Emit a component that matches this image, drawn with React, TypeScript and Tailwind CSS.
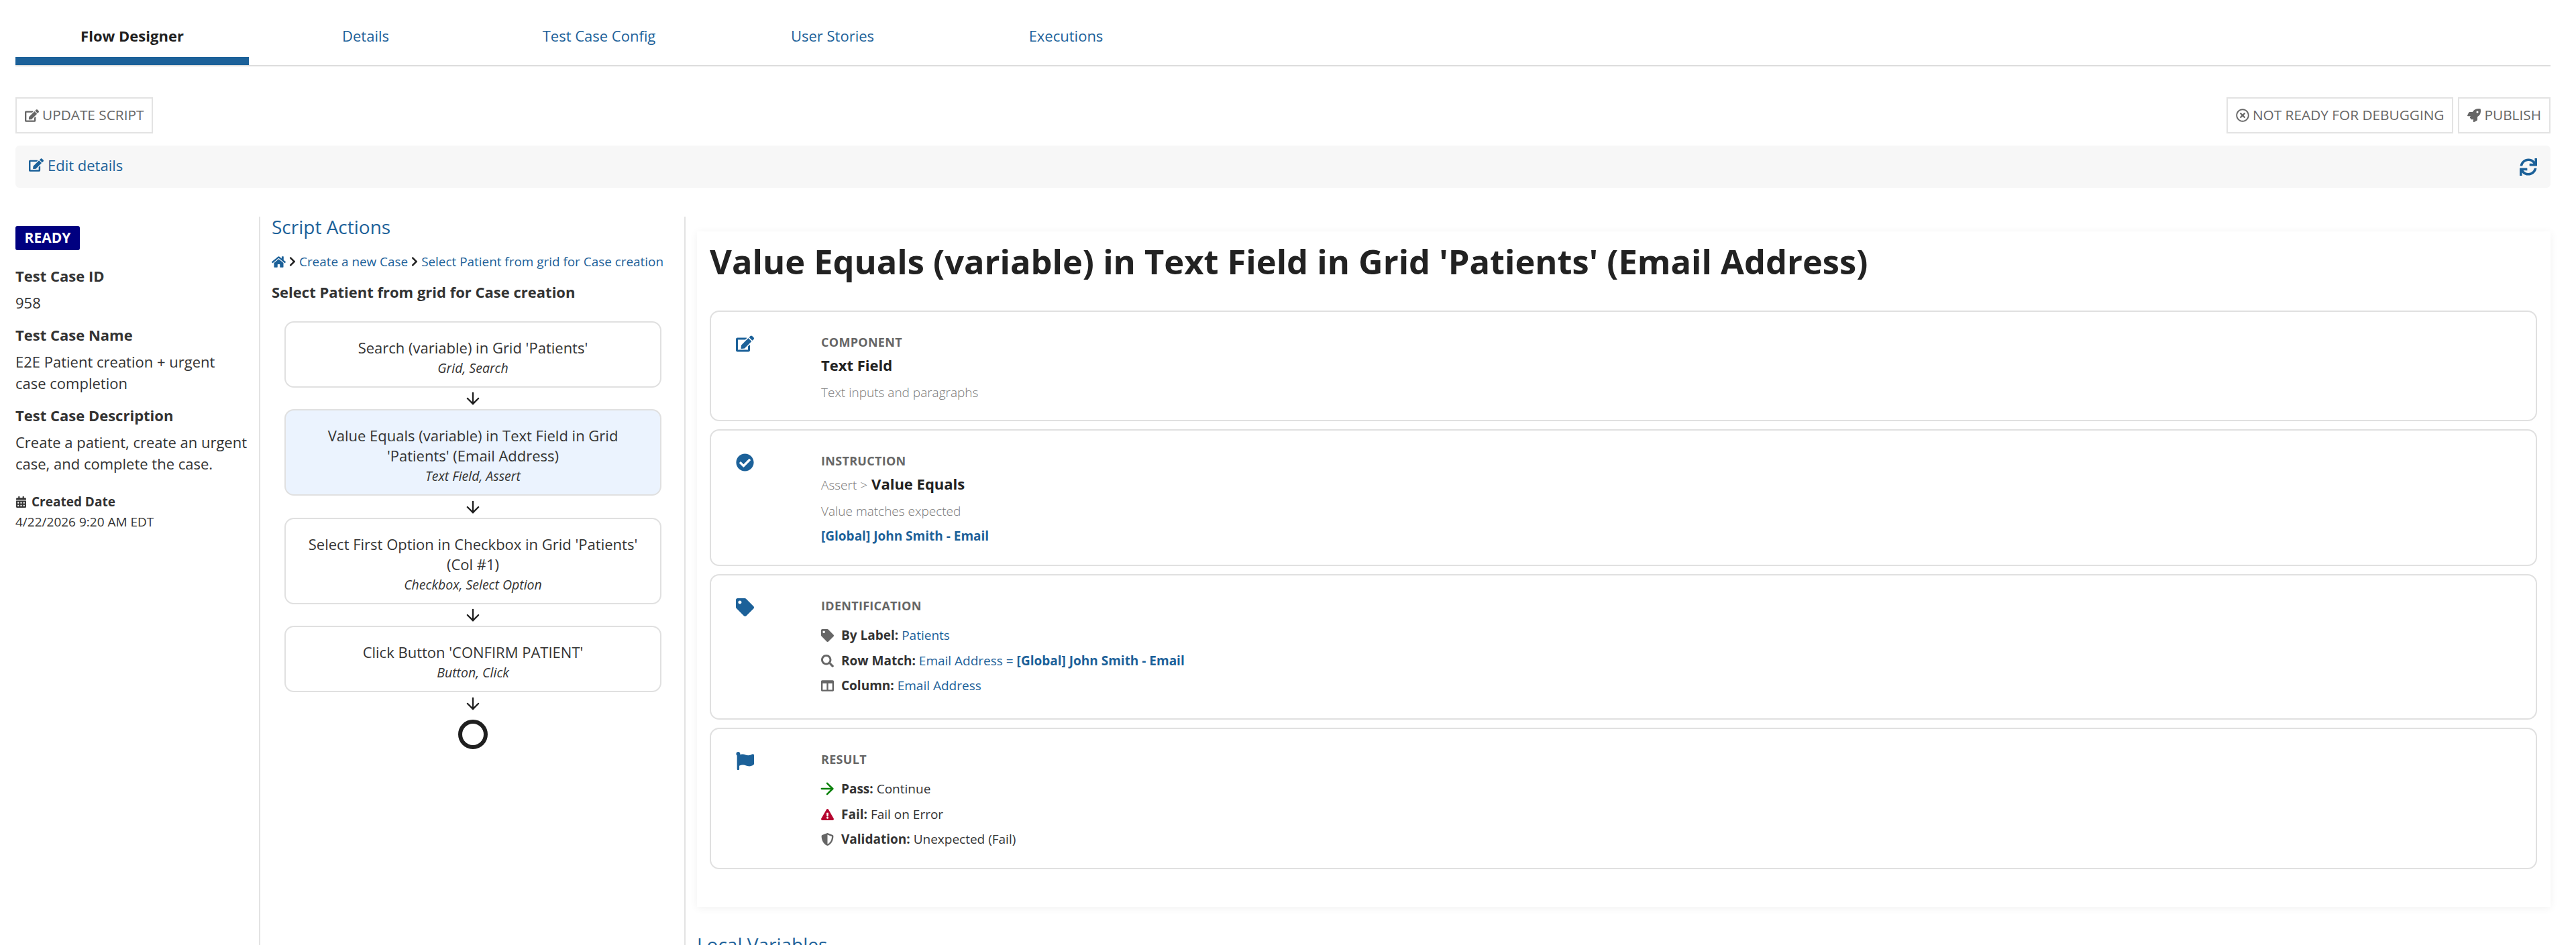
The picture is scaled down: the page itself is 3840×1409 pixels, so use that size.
import { ArrowDown, ArrowRight } from "lucide-react";
import {
  FaCalendarAlt,
  FaCheckCircle,
  FaChevronRight,
  FaColumns,
  FaEdit,
  FaExclamationTriangle,
  FaFlag,
  FaHome,
  FaRegTimesCircle,
  FaRocket,
  FaSearch,
  FaShieldAlt,
  FaSync,
  FaTag,
} from "react-icons/fa";
import type { ReactNode } from "react";

const tabs = ["Details", "Test Case Config", "User Stories", "Executions"];

function ToolButton({ icon, label }: { icon: ReactNode; label: string }) {
  return (
    <button className="h-[54px] flex items-center gap-[5px] px-[12px] bg-white border-2 border-[#e3e3e3] text-[20.8px] font-medium text-[#666666]">
      {icon}
      {label}
    </button>
  );
}

function Step({ title, sub, active }: { title: ReactNode; sub: string; active?: boolean }) {
  return (
    <div
      className={`w-[562px] ml-[19px] rounded-[14px] border-2 border-[#e0e0e0] pt-[22px] pb-[14px] px-[20px] text-center ${
        active ? "bg-[#ebf3fe]" : "bg-white"
      }`}
    >
      <div className="text-[22px] leading-[30px] text-[#333333]">{title}</div>
      <div className="mt-[3px] text-[19.5px] leading-[26px] italic text-[#333333]">{sub}</div>
    </div>
  );
}

function FlowArrow({ h }: { h: string }) {
  return (
    <div className={`w-[562px] ml-[19px] flex items-center justify-center ${h}`}>
      <ArrowDown size={28} strokeWidth={2} className="text-[#1f1f1f]" />
    </div>
  );
}

function InfoCard({ icon, label, pb, children }: { icon: ReactNode; label: string; pb: string; children: ReactNode }) {
  return (
    <div className={`flex rounded-[14px] border-2 border-[#e0e0e0] pt-[32px] ${pb}`}>
      <div className="w-[164px] pl-[37px] pt-[2px] shrink-0 text-[#1c6199]">{icon}</div>
      <div>
        <div className="text-[18px] leading-[26px] font-bold tracking-[0.3px] text-[#666666] uppercase">{label}</div>
        {children}
      </div>
    </div>
  );
}

function Row({ icon, children, mt }: { icon: ReactNode; children: ReactNode; mt: string }) {
  return (
    <div className={`flex items-center text-[19px] leading-[26px] text-[#333333] ${mt}`}>
      <span className="w-[30px] shrink-0 flex items-center text-[#666666]">{icon}</span>
      {children}
    </div>
  );
}

export default function App() {
  return (
    <div className="w-[3840px] h-[1409px] overflow-hidden bg-white font-['Open_Sans',sans-serif] text-[22px] text-[#333333]">
      {/* Tabs */}
      <div className="mx-[23px] flex border-b-2 border-[#dcdcdc] h-[99px] w-[3779px]">
        <div className="w-[348px] h-[97px] pt-[21px] flex items-center justify-center border-b-[12px] border-[#1c6199] font-bold text-[#1f1f1f]">
          Flow Designer
        </div>
        {tabs.map((t) => (
          <div key={t} className="w-[348px] h-[97px] pb-[12px] pt-[21px] flex items-center justify-center text-[#1c6199]">
            {t}
          </div>
        ))}
      </div>

      {/* Toolbar */}
      <div className="mx-[23px] mt-[46px] w-[3779px] flex justify-between">
        <ToolButton icon={<FaEdit size={21} />} label="UPDATE SCRIPT" />
        <div className="flex gap-[7px]">
          <ToolButton icon={<FaRegTimesCircle size={20} />} label="NOT READY FOR DEBUGGING" />
          <ToolButton icon={<FaRocket size={20} />} label="PUBLISH" />
        </div>
      </div>

      <div className="mx-[23px] mt-[18px] w-[3779px] h-[63px] rounded-[6px] bg-[#f7f7f7] flex items-center justify-between pl-[20px] pr-[20px] text-[#1c6199]">
        <div className="flex items-center gap-[6px] -mt-[5px]">
          <FaEdit size={22} />
          Edit details
        </div>
        <FaSync size={26} />
      </div>

      {/* Columns */}
      <div className="mt-[43px] flex items-start">
        <div className="w-[388px] h-[1086px] border-r-2 border-[#e3e3e3] pl-[23px] pt-[14px]">
          <div className="w-[96px] h-[36px] rounded-[3px] bg-[#000080] text-white font-bold text-[21px] flex items-center justify-center">
            READY
          </div>
          <div className="mt-[22px] font-bold leading-[32px]">Test Case ID</div>
          <div className="mt-[8px] leading-[32px]">958</div>
          <div className="mt-[16px] font-bold leading-[32px]">Test Case Name</div>
          <div className="mt-[8px] leading-[32px] w-[348px]">E2E Patient creation + urgent case completion</div>
          <div className="mt-[16px] font-bold leading-[32px]">Test Case Description</div>
          <div className="mt-[8px] leading-[32px] w-[348px]">Create a patient, create an urgent case, and complete the case.</div>
          <div className="mt-[29px] flex items-center gap-[7px] text-[19px] leading-[24px] font-bold">
            <FaCalendarAlt size={17} />
            Created Date
          </div>
          <div className="mt-[6px] text-[19px] leading-[24px]">4/22/2026 9:20 AM EDT</div>
        </div>

        <div className="w-[634px] h-[1086px] border-r-2 border-[#e3e3e3] pl-[17px]">
          <div className="text-[28px] leading-[30px] text-[#1c6199]">Script Actions</div>
          <div className="mt-[25px] flex items-center text-[18.9px] leading-[24px] text-[#1c6199] whitespace-nowrap">
            <FaHome size={21} />
            <FaChevronRight size={16} className="mx-[2px] text-[#1f1f1f]" />
            Create a new Case
            <FaChevronRight size={16} className="mx-[2px] text-[#1f1f1f]" />
            Select Patient from grid for Case creation
          </div>
          <div className="mt-[18px] font-bold leading-[30px]">Select Patient from grid for Case creation</div>
          <div className="mt-[29px]">
            <Step title="Search (variable) in Grid 'Patients'" sub="Grid, Search" />
            <FlowArrow h="h-[32px]" />
            <Step active title="Value Equals (variable) in Text Field in Grid 'Patients' (Email Address)" sub="Text Field, Assert" />
            <FlowArrow h="h-[33px]" />
            <Step title="Select First Option in Checkbox in Grid 'Patients' (Col #1)" sub="Checkbox, Select Option" />
            <FlowArrow h="h-[32px]" />
            <Step title="Click Button 'CONFIRM PATIENT'" sub="Button, Click" />
            <FlowArrow h="h-[33px]" />
            <div className="w-[562px] ml-[19px] mt-[8px] flex justify-center">
              <div className="w-[44px] h-[44px] rounded-full border-[6px] border-[#1f1f1f]" />
            </div>
          </div>
        </div>

        <div className="pl-[17px] pt-[22px]">
          <div className="w-[2763px] h-[1007px] bg-white shadow-[0_2px_12px_rgba(0,0,0,0.06)] pt-[15px] pl-[19px] pr-[20px]">
            <h1 className="text-[50.6px] leading-[60px] font-bold text-[#222222]">
              Value Equals (variable) in Text Field in Grid 'Patients' (Email Address)
            </h1>
            <div className="mt-[43px] flex flex-col gap-[12px]">
              <InfoCard icon={<FaEdit size={27} />} label="Component" pb="pb-[28px]">
                <div className="mt-[6px] font-bold leading-[30px] text-[#222222]">Text Field</div>
                <div className="mt-[13px] text-[19px] leading-[26px] font-light text-[#777777]">Text inputs and paragraphs</div>
              </InfoCard>
              <InfoCard icon={<FaCheckCircle size={27} />} label="Instruction" pb="pb-[30px]">
                <div className="mt-[6px] leading-[30px] flex items-baseline gap-[6px]">
                  <span className="text-[19px] font-light text-[#777777]">Assert &gt;</span>
                  <span className="font-bold text-[#222222]">Value Equals</span>
                </div>
                <div className="mt-[11px] text-[19px] leading-[26px] font-light text-[#777777]">Value matches expected</div>
                <div className="mt-[11px] text-[19px] leading-[26px] font-bold text-[#1c6199]">[Global] John Smith - Email</div>
              </InfoCard>
              <InfoCard icon={<FaTag size={27} />} label="Identification" pb="pb-[36px]">
                <Row mt="mt-[18px]" icon={<FaTag size={19} />}>
                  <b className="font-bold mr-[5px]">By Label:</b>
                  <span className="text-[#1c6199]">Patients</span>
                </Row>
                <Row mt="mt-[12px]" icon={<FaSearch size={19} />}>
                  <b className="font-bold mr-[5px]">Row Match:</b>
                  <span className="text-[#1c6199]">
                    Email Address = <b className="font-bold">[Global] John Smith - Email</b>
                  </span>
                </Row>
                <Row mt="mt-[11px]" icon={<FaColumns size={19} />}>
                  <b className="font-bold mr-[5px]">Column:</b>
                  <span className="text-[#1c6199]">Email Address</span>
                </Row>
              </InfoCard>
              <InfoCard icon={<FaFlag size={27} />} label="Result" pb="pb-[30px]">
                <Row mt="mt-[18px]" icon={<ArrowRight size={28} strokeWidth={2.2} className="text-[#0a800a] -ml-[5px] -my-[2px]" />}>
                  <b className="font-bold mr-[5px]">Pass:</b>
                  Continue
                </Row>
                <Row mt="mt-[12px]" icon={<FaExclamationTriangle size={19} className="text-[#b5052f]" />}>
                  <b className="font-bold mr-[5px]">Fail:</b>
                  Fail on Error
                </Row>
                <Row mt="mt-[11px]" icon={<FaShieldAlt size={19} />}>
                  <b className="font-bold mr-[5px]">Validation:</b>
                  Unexpected (Fail)
                </Row>
              </InfoCard>
            </div>
          </div>
          <div className="mt-[41px] text-[28px] leading-[30px] text-[#1c6199]">Local Variables</div>
        </div>
      </div>
    </div>
  );
}
